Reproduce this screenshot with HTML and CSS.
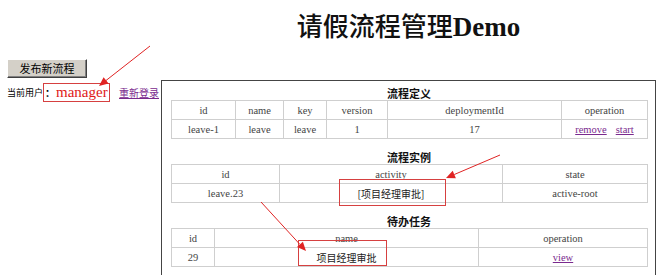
FILE: index.html
```html
<!DOCTYPE html>
<html lang="zh">
<head>
<meta charset="utf-8">
<title>请假流程管理Demo</title>
<link rel="stylesheet" href="styles.css">
</head>
<body>
<div class="page">
  <h1 class="title">请假流程管理<span class="title-latin">Demo</span></h1>
  <div class="side">
    <button class="btn" type="button">发布新流程</button>
    <div class="user">
      <span class="user-label">当前用户</span><span class="who"><b class="colon">：</b>manager</span><a class="relogin" href="#">重新登录</a>
    </div>
  </div>
  <div class="panel">
    <div class="cap">流程定义</div>
    <table class="grid">
      <colgroup><col class="w64"><col class="w48"><col class="w43"><col class="w61"><col class="w174"><col class="w86"></colgroup>
      <tr><td>id</td><td>name</td><td>key</td><td>version</td><td>deploymentId</td><td>operation</td></tr>
      <tr><td>leave-1</td><td>leave</td><td>leave</td><td>1</td><td>17</td><td><a href="#">remove</a><a class="gap" href="#">start</a></td></tr>
    </table>
    <div class="cap cap-next">流程实例</div>
    <table class="grid">
      <colgroup><col class="w108"><col class="w223"><col class="w145"></colgroup>
      <tr><td>id</td><td>activity</td><td>state</td></tr>
      <tr><td>leave.23</td><td class="cjk">[项目经理审批]</td><td>active-root</td></tr>
    </table>
    <div class="cap cap-next">待办任务</div>
    <table class="grid">
      <colgroup><col class="w43"><col class="w264"><col class="w169"></colgroup>
      <tr><td>id</td><td>name</td><td>operation</td></tr>
      <tr><td>29</td><td class="cjk">项目经理审批</td><td><a href="#">view</a></td></tr>
    </table>
  </div>
  <div class="mark mark-activity"></div>
  <div class="mark mark-task"></div>
  <svg class="notes" width="670" height="275" viewBox="0 0 670 275">
    <g stroke="#e02424" stroke-width="1" fill="none">
      <line x1="150" y1="46" x2="106" y2="80.5"/>
      <line x1="500" y1="155" x2="454.3" y2="174.5"/>
      <line x1="261" y1="202" x2="299.9" y2="244.4"/>
    </g>
    <g fill="#e02424">
      <polygon points="99,86 108.6,83.6 103.6,77.3"/>
      <polygon points="446,178 455.9,178.2 452.7,170.8"/>
      <polygon points="306,251 297,247.1 302.9,241.7"/>
    </g>
  </svg>
</div>
</body>
</html>
```
FILE: styles.css
```css
html, body {
  margin: 0;
  padding: 0;
  background: #fff;
}

.page {
  position: relative;
  width: 670px;
  height: 275px;
  overflow: hidden;
  display: grid;
  grid-template-columns: 161px 495px;
  grid-template-rows: 59px auto;
  font-family: "Noto Sans CJK SC", sans-serif;
  color: #000;
}

.title {
  grid-column: 2;
  grid-row: 1;
  margin: 0;
  padding-top: 10px;
  text-align: center;
  font-family: "Noto Sans CJK SC", sans-serif;
  font-size: 26px;
  line-height: 30px;
  font-weight: 500;
  color: #111;
  white-space: nowrap;
}

.title-latin {
  font-family: "Liberation Serif", serif;
  font-size: 27px;
  font-weight: bold;
}

.side {
  grid-column: 1;
  grid-row: 2;
  padding-left: 7px;
}

.btn {
  display: block;
  width: 80px;
  height: 19px;
  padding: 0;
  margin: 0;
  background: #d4d0c8;
  border: 1px solid;
  border-color: #fff #404040 #404040 #fff;
  box-shadow: inset -1px -1px #808080;
  font-family: "Noto Sans CJK SC", sans-serif;
  font-size: 11px;
  line-height: 15px;
  color: #000;
}

.user {
  display: flex;
  align-items: center;
  height: 19px;
  margin-top: 5px;
  font-size: 9px;
  white-space: nowrap;
}

.user-label {
  flex: 0 0 36px;
  font-size: 9px;
}

.who {
  box-sizing: border-box;
  flex: 0 0 67px;
  display: flex;
  align-items: center;
  height: 19px;
  border: 1.5px solid #d64040;
  padding-left: 1px;
  font-family: "Liberation Serif", serif;
  font-size: 15px;
  color: #e01818;
}

.colon {
  font-family: "Noto Sans CJK SC", sans-serif;
  font-size: 10px;
  color: #000;
  margin-right: 1px;
}

.relogin {
  margin-left: 9px;
  color: #7a2a8e;
  font-size: 10px;
}

.panel {
  grid-column: 2;
  grid-row: 2;
  margin-top: 21px;
  height: 220px;
  border: 1px solid #444;
  padding: 5px 8px 0 9px;
}

.cap {
  height: 14px;
  line-height: 14px;
  text-align: center;
  font-size: 11px;
  font-weight: bold;
  color: #111;
}

.cap-next {
  margin-top: 11px;
}

.grid {
  width: 476px;
  table-layout: fixed;
  border-collapse: collapse;
  border: 1px solid #333;
}

.grid td {
  height: 18px;
  padding: 0;
  border: 1px solid #cfcfcf;
  text-align: center;
  font-family: "Liberation Serif", serif;
  font-size: 10.5px;
  line-height: 17px;
  color: #444;
}

.grid td.cjk {
  font-family: "Noto Sans CJK SC", sans-serif;
  font-size: 10px;
  color: #222;
}

.grid a {
  color: #7a2a8e;
}

.grid a.gap {
  margin-left: 9px;
}

.w43 { width: 43px; }
.w48 { width: 48px; }
.w61 { width: 61px; }
.w64 { width: 64px; }
.w86 { width: 86px; }
.w108 { width: 108px; }
.w145 { width: 145px; }
.w169 { width: 169px; }
.w174 { width: 174px; }
.w223 { width: 223px; }
.w264 { width: 264px; }

.mark {
  position: absolute;
  box-sizing: border-box;
  border: 1.5px solid #d64040;
}

.mark-activity {
  left: 339px;
  top: 179px;
  width: 107px;
  height: 27px;
}

.mark-task {
  left: 298px;
  top: 240px;
  width: 89px;
  height: 26px;
}

.notes {
  position: absolute;
  left: 0;
  top: 0;
  pointer-events: none;
}
```
